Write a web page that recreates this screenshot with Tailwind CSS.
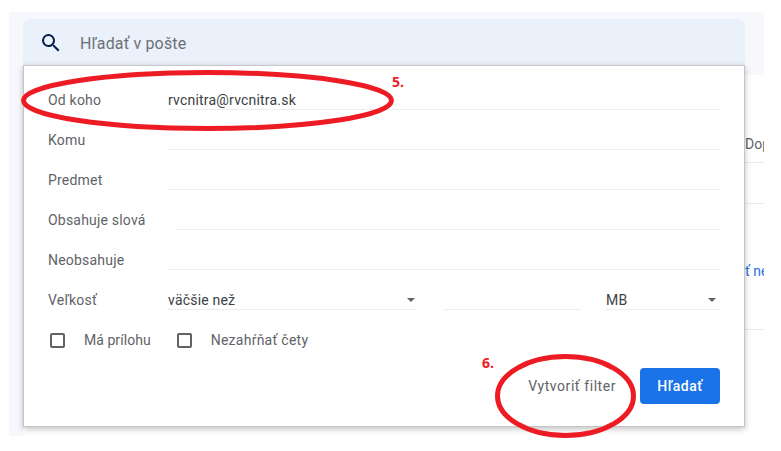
<!DOCTYPE html>
<html lang="sk">
<head>
    <meta charset="UTF-8">
    <title>Hľadať v pošte</title>
    <script src="https://cdn.jsdelivr.net/npm/@tailwindcss/browser@4"></script>
</head>
<body class="bg-white font-['Roboto',sans-serif] text-[14px] text-[#5f6368]">
    <div class="relative w-[781px] h-[451px] overflow-hidden pt-[12px] pl-[9px]">
        <div class="flex w-[755px]">
            <!-- left strip of the mail page -->
            <div class="w-[14px] h-[424px] bg-[#f6f8fc]"></div>

            <div class="w-[722px]">
                <div class="bg-[#f6f8fc] pt-[7px]">
                    <div class="h-[47px] bg-[#eaf1fb] rounded-t-[8px] flex items-center pl-[16px] text-[16px]">
                        <svg class="w-[24px] h-[24px] text-[#041e49]" viewBox="0 0 24 24" fill="currentColor"><path d="M15.5 14h-.79l-.28-.27A6.47 6.47 0 0 0 16 9.5 6.5 6.5 0 1 0 9.5 16c1.61 0 3.09-.59 4.23-1.57l.27.28v.79l5 4.99L20.49 19l-4.99-5zm-6 0C7.01 14 5 11.99 5 9.5S7.01 5 9.5 5 14 7.01 14 9.5 11.99 14 9.5 14z"/></svg>
                        <span class="ml-[17px] mt-[2px] tracking-[0.15px] text-[#6b7075]">Hľadať v pošte</span>
                    </div>
                </div>

                <!-- search options dialog -->
                <div class="relative mt-[-1px] h-[362px] bg-white border border-[#c4c4c4] border-t-[#c8c8c8] shadow-[0_2px_6px_rgba(0,0,0,0.25)] pl-[24px] pr-[24px] tracking-[0.2px]">
                    <div class="flex h-[40px] mt-[4px] items-center">
                        <span class="w-[120px] h-[40px] leading-[61px]">Od koho</span>
                        <div class="flex-1 h-[40px] border-b border-[#eceff1] leading-[61px] text-[#3c4043]">rvcnitra@rvcnitra.sk</div>
                    </div>
                    <div class="flex h-[40px]">
                        <span class="w-[120px] leading-[61px]">Komu</span>
                        <div class="flex-1 border-b border-[#eceff1]"></div>
                    </div>
                    <div class="flex h-[40px]">
                        <span class="w-[120px] leading-[61px]">Predmet</span>
                        <div class="flex-1 border-b border-[#eceff1]"></div>
                    </div>
                    <div class="flex h-[40px]">
                        <span class="w-[128px] leading-[61px]">Obsahuje slová</span>
                        <div class="flex-1 border-b border-[#eceff1]"></div>
                    </div>
                    <div class="flex h-[40px]">
                        <span class="w-[120px] leading-[61px]">Neobsahuje</span>
                        <div class="flex-1 border-b border-[#eceff1]"></div>
                    </div>
                    <div class="flex h-[40px]">
                        <span class="w-[120px] leading-[61px]">Veľkosť</span>
                        <div class="w-[249px] border-b border-[#eceff1] leading-[61px] text-[#3c4043] flex justify-between pr-[2px]">
                            <span>väčšie než</span>
                            <span class="w-0 h-0 mt-[28px] border-x-[4px] border-x-transparent border-t-[4px] border-t-[#5f6368]"></span>
                        </div>
                        <div class="w-[137px] ml-[27px] border-b border-[#eceff1]"></div>
                        <div class="w-[114px] ml-[25px] border-b border-[#eceff1] leading-[61px] text-[#3c4043] flex justify-between pr-[4px]">
                            <span>MB</span>
                            <span class="w-0 h-0 mt-[28px] border-x-[4px] border-x-transparent border-t-[4px] border-t-[#5f6368]"></span>
                        </div>
                    </div>
                    <div class="flex items-center mt-[20px] h-[20px] pl-[2px]">
                        <span class="w-[15px] h-[15px] border-2 border-[#5f6368] rounded-[2px]"></span>
                        <span class="ml-[19px] tracking-[0.05px]">Má prílohu</span>
                        <span class="ml-[26px] w-[15px] h-[15px] border-2 border-[#5f6368] rounded-[2px]"></span>
                        <span class="ml-[19px] tracking-[0.25px]">Nezahŕňať čety</span>
                    </div>
                    <div class="flex justify-end items-center mt-[18px]">
                        <span class="tracking-[0.55px] text-[#5f6368]">Vytvoriť filter</span>
                        <button class="ml-[24px] w-[80px] h-[36px] bg-[#1a73e8] rounded-[4px] text-white font-medium tracking-[0.5px]">Hľadať</button>
                    </div>
                </div>
            </div>

            <!-- what shows of the mail list behind the dialog -->
            <div class="w-[19px] overflow-hidden">
                <div class="h-[63px] bg-[#f6f8fc]"></div>
                <div class="h-[88px] border-b border-[#e8eaed] pt-[59px] leading-[20px] whitespace-nowrap text-[#5f6368]">Dop</div>
                <div class="h-[41px] border-b border-[#e8eaed]"></div>
                <div class="h-[126px] border-b border-[#e8eaed] pt-[57px] leading-[20px] whitespace-nowrap text-[#1a73e8]">ť ne</div>
            </div>
        </div>

        <!-- hand drawn marks on top of the screenshot -->
        <svg class="absolute left-0 top-0 w-[781px] h-[451px] pointer-events-none" viewBox="0 0 781 451" fill="none">
            <ellipse cx="207.5" cy="100.5" rx="184" ry="28" stroke="#ed1c24" stroke-width="5"/>
            <ellipse cx="565.5" cy="396" rx="68" ry="39.5" stroke="#ed1c24" stroke-width="5"/>
        </svg>
        <span class="absolute left-[392px] top-[71px] font-['Open_Sans',sans-serif] text-[14px] font-bold text-[#ed1c24]">5.</span>
        <span class="absolute left-[482px] top-[352px] font-['Open_Sans',sans-serif] text-[14px] font-bold text-[#ed1c24]">6.</span>
    </div>
</body>
</html>
